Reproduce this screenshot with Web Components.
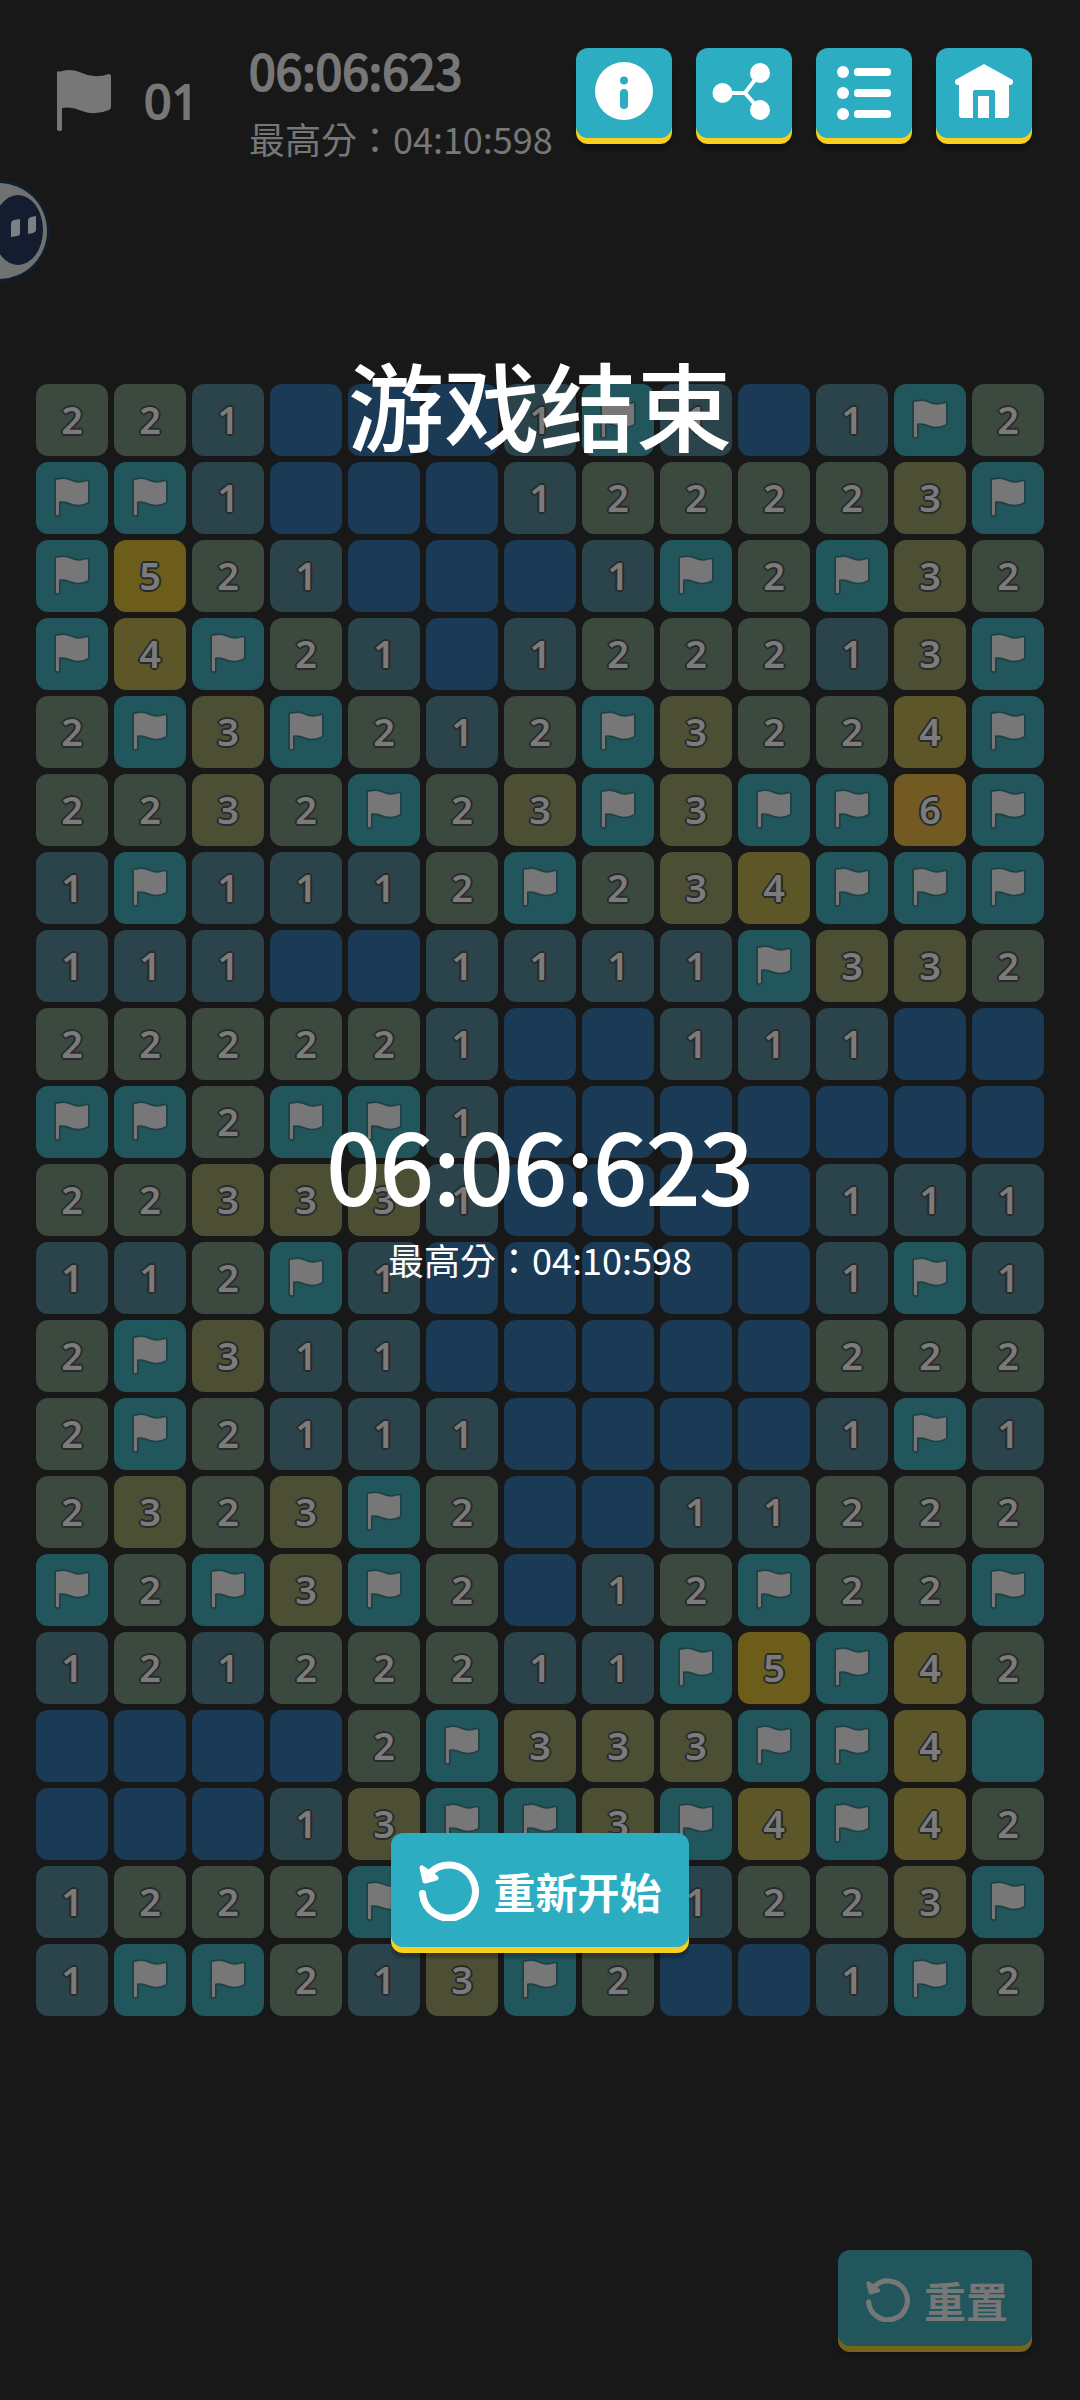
<!DOCTYPE html>
<html lang="zh-CN">
<head>
<meta charset="utf-8">
<meta name="viewport" content="width=device-width, initial-scale=1">
<title>游戏结束</title>
<style>
  body {
    margin: 0;
    background: #181818;
    font-family: "Noto Sans CJK SC", "Noto Sans", sans-serif;
  }
</style>
</head>
<body>
<mine-game></mine-game>
<script>
const FLAG_PATH = "M1 1Q3 2 5 1Q15 -2 25 3Q37 9 52 4Q54 4 54 6V37Q54 39 52 40Q38 46 25 41Q15 36 5 38V59Q5 61 3 61H2Q0 61 0 59V2Z";

// one digit per open cell, F for a flag, . for a cell still covered
const BOARD = [
  "2210001F101F2",
  "FF1000122223F",
  "F5210001F2F32",
  "F4F210122213F",
  "2F3F212F3224F",
  "2232F23F3FF6F",
  "1F1112F234FFF",
  "111001111F332",
  "2222210011100",
  "FF2FF10000000",
  "2233310000111",
  "112F1000001F1",
  "2F31100000222",
  "2F211100001F1",
  "2323F20011222",
  "F2F3F2012F22F",
  "12122211F5F42",
  "00002F333FF4.",
  "00013FF3F4F42",
  "1222F0001223F",
  "1FF213F2001F2"
];

const ICONS = {
  info: `<circle cx="48" cy="43" r="29"/>
    <g fill="#2dadc1"><circle cx="48" cy="32.5" r="4"/><rect x="44" y="41" width="8" height="20" rx="4"/></g>`,
  share: `<circle cx="26.5" cy="45" r="10"/><circle cx="64" cy="25" r="10"/><circle cx="64" cy="62" r="10"/>
    <path d="M27 45H49L64 25M49 45L64 62" fill="none" stroke="#fff" stroke-width="4"/>`,
  list: `<circle cx="27" cy="24" r="6"/><circle cx="27" cy="45" r="6"/><circle cx="27" cy="66" r="6"/>
    <rect x="38" y="20" width="37" height="8" rx="3.5"/><rect x="38" y="41" width="37" height="8" rx="3.5"/><rect x="38" y="62" width="37" height="8" rx="3.5"/>`,
  home: `<path d="M48 16L76 31.500Q77 32 77 34Q77 37 74 37H73V67Q73 70 70 70H59V44Q59 42 57 42H39Q37 42 37 44V70H26Q23 70 23 67V37H22Q19 37 19 34Q19 32 20 31.500Z"/>
    <rect x="42" y="48" width="11" height="22"/>`
};

class FlagIcon extends HTMLElement {
  constructor() {
    super();
    this.attachShadow({ mode: "open" }).innerHTML = `<style>
      :host { display: block; }
      svg { display: block; width: 100%; overflow: visible; }
      path {
        fill: #777;
        stroke: var(--flag-outline, none);
        stroke-width: 6;
        stroke-linejoin: round;
        paint-order: stroke;
      }
    </style>
    <svg viewBox="0 0 54 61" aria-hidden="true"><path d="${FLAG_PATH}"/></svg>`;
  }
}

class RestartIcon extends HTMLElement {
  constructor() {
    super();
    this.attachShadow({ mode: "open" }).innerHTML = `<style>
      :host { display: block; }
      svg { display: block; width: 100%; }
    </style>
    <svg viewBox="0 0 60 60" fill="currentColor" stroke="currentColor" stroke-linecap="round" stroke-linejoin="round" aria-hidden="true">
      <path d="M3.500 32.500A26.500 26.500 0 1 0 12 11" fill="none" stroke-width="7"/>
      <path d="M3 7L6 20L17 17L12 13Z" stroke-width="5"/>
    </svg>`;
  }
}

class MineCell extends HTMLElement {
  connectedCallback() {
    const value = this.getAttribute("value");
    const isFlag = value === "F";
    const isNumber = value > 0;
    this.attachShadow({ mode: "open" }).innerHTML = `<style>
      :host { display: block; aspect-ratio: 1; --cell: #21565c; }
      :host([value="0"]) { --cell: #1a3a56; }
      :host([value="1"]) { --cell: #2b434b; }
      :host([value="2"]) { --cell: #3c493f; }
      :host([value="3"]) { --cell: #4c4f33; }
      :host([value="4"]) { --cell: #5d5628; }
      :host([value="5"]) { --cell: #6d5d1b; }
      :host([value="6"]) { --cell: #735a22; }
      button {
        display: flex;
        align-items: center;
        justify-content: center;
        box-sizing: border-box;
        width: 100%;
        height: 100%;
        padding: 0 0 2px;
        border: 0;
        border-radius: 12px;
        background: var(--cell);
        color: #7b7b7b;
        font: 600 38px/1 "Noto Sans", "Open Sans", sans-serif;
        text-shadow: 2px 0 #272b2b, -2px 0 #272b2b, 0 2px #272b2b, 0 -2px #272b2b,
          1px 1px #272b2b, -1px 1px #272b2b, 1px -1px #272b2b, -1px -1px #272b2b;
      }
      flag-icon { width: 32px; --flag-outline: #1f4145; }
    </style>
    <button type="button" aria-label="${isFlag ? "旗" : value}">${isFlag ? "<flag-icon></flag-icon>" : isNumber ? value : ""}</button>`;
  }
}

class MineBoard extends HTMLElement {
  constructor() {
    super();
    const cells = BOARD.join("").split("").map((v) => `<mine-cell value="${v}"></mine-cell>`).join("");
    this.attachShadow({ mode: "open" }).innerHTML = `<style>
      :host {
        display: grid;
        grid-template-columns: repeat(13, 1fr);
        gap: 6px;
      }
    </style>${cells}`;
  }
}

class GameButton extends HTMLElement {
  connectedCallback() {
    const icon = ICONS[this.getAttribute("icon")];
    this.attachShadow({ mode: "open" }).innerHTML = `<style>
      :host { display: block; padding-bottom: 6px; }
      button {
        display: flex;
        align-items: center;
        justify-content: center;
        gap: 14px;
        box-sizing: border-box;
        height: var(--height, 90px);
        padding: var(--pad, 0);
        border: 0;
        border-radius: 12px;
        background: #2dadc1;
        box-shadow: 0 6px #f9ce1d, 0 11px 3px rgba(0, 0, 0, .25);
        color: #fff;
        font: 700 42px/48px "Noto Sans CJK SC", sans-serif;
      }
      :host([dim]) button {
        background: #21565c;
        box-shadow: 0 6px #776419, 0 11px 3px rgba(0, 0, 0, .12);
        color: #777;
      }
      svg { display: block; width: 96px; height: 90px; }
    </style>
    <button type="button" ${icon ? `aria-label="${this.getAttribute("label")}"` : ""}>${
      icon ? `<svg viewBox="0 0 96 90" fill="#fff">${icon}</svg>` : "<slot></slot>"
    }</button>`;
  }
}

class GameHeader extends HTMLElement {
  constructor() {
    super();
    this.attachShadow({ mode: "open" }).innerHTML = `<style>
      :host {
        display: flex;
        align-items: center;
        padding: 39px 48px 0 57px;
        color: #777;
        white-space: nowrap;
      }
      flag-icon { width: 54px; }
      .count { margin: 0 50px 0 33px; font: 400 48px/60px "Noto Sans", sans-serif; -webkit-text-stroke: 2px; }
      .time { margin-bottom: 15px; font-size: 48px; line-height: 60px; -webkit-text-stroke: 2px; }
      .best { font: 36px/48px "Noto Sans CJK TC", sans-serif; }
      nav { display: flex; gap: 24px; margin-left: auto; align-self: flex-start; padding-top: 9px; }
    </style>
    <flag-icon></flag-icon>
    <div class="count">01</div>
    <div>
      <div class="time">06:06:623</div>
      <div class="best" lang="zh-TW">最高分：04:10:598</div>
    </div>
    <nav>
      <game-button icon="info" label="info"></game-button>
      <game-button icon="share" label="share"></game-button>
      <game-button icon="list" label="list"></game-button>
      <game-button icon="home" label="home"></game-button>
    </nav>`;
  }
}

class FloatingBubble extends HTMLElement {
  constructor() {
    super();
    this.attachShadow({ mode: "open" }).innerHTML = `<style>
      :host { display: block; width: 52px; height: 104px; }
      svg { display: block; }
    </style>
    <svg width="52" height="104" viewBox="0 0 52 104" aria-hidden="true">
      <circle cx="-1" cy="52" r="51" fill="#131e2c"/>
      <circle cx="-1" cy="52" r="48" fill="#6e7271"/>
      <ellipse cx="18" cy="51" rx="25" ry="35" fill="#131d2f"/>
      <path d="M14 41L20 40V54Q20 57 17 57L11 58V44Q11 42 14 41Z" fill="#7b8082"/>
      <path d="M31 38L36 37V51Q36 53 33 54L28 55V41Q28 39 31 38Z" fill="#7b8082"/>
    </svg>`;
  }
}

class GameOver extends HTMLElement {
  constructor() {
    super();
    this.attachShadow({ mode: "open" }).innerHTML = `<style>
      :host {
        display: flex;
        flex-direction: column;
        align-items: center;
        padding-top: 343px;
        color: #fff;
        pointer-events: none;
      }
      h1 { margin: 0; font-size: 96px; line-height: 120px; font-weight: 500; }
      .time { margin-top: 641px; font-size: 96px; line-height: 120px; -webkit-text-stroke: 2px; }
      .best { margin-top: 11px; font: 36px/48px "Noto Sans CJK TC", sans-serif; }
      game-button { margin-top: 550px; --height: 114px; --pad: 2px 27px 0 28px; pointer-events: auto; }
      restart-icon { width: 60px; }
    </style>
    <h1>游戏结束</h1>
    <div class="time">06:06:623</div>
    <div class="best" lang="zh-TW">最高分：04:10:598</div>
    <game-button><restart-icon></restart-icon>重新开始</game-button>`;
  }
}

class MineGame extends HTMLElement {
  constructor() {
    super();
    this.attachShadow({ mode: "open" }).innerHTML = `<style>
      :host {
        position: relative;
        display: flex;
        flex-direction: column;
        min-height: 100vh;
      }
      mine-board { margin: 222px 36px 48px; }
      footer { display: flex; justify-content: flex-end; margin-top: auto; padding: 0 48px 48px; }
      footer game-button { --height: 96px; --pad: 4px 24px 0 28px; }
      restart-icon { width: 44px; }
      floating-bubble { position: absolute; left: 0; top: 179px; }
      game-over { position: absolute; inset: 0; }
    </style>
    <game-header></game-header>
    <mine-board></mine-board>
    <footer>
      <game-button dim><restart-icon></restart-icon>重置</game-button>
    </footer>
    <floating-bubble></floating-bubble>
    <game-over></game-over>`;
  }
}

customElements.define("flag-icon", FlagIcon);
customElements.define("restart-icon", RestartIcon);
customElements.define("mine-cell", MineCell);
customElements.define("mine-board", MineBoard);
customElements.define("game-button", GameButton);
customElements.define("game-header", GameHeader);
customElements.define("floating-bubble", FloatingBubble);
customElements.define("game-over", GameOver);
customElements.define("mine-game", MineGame);
</script>
</body>
</html>
